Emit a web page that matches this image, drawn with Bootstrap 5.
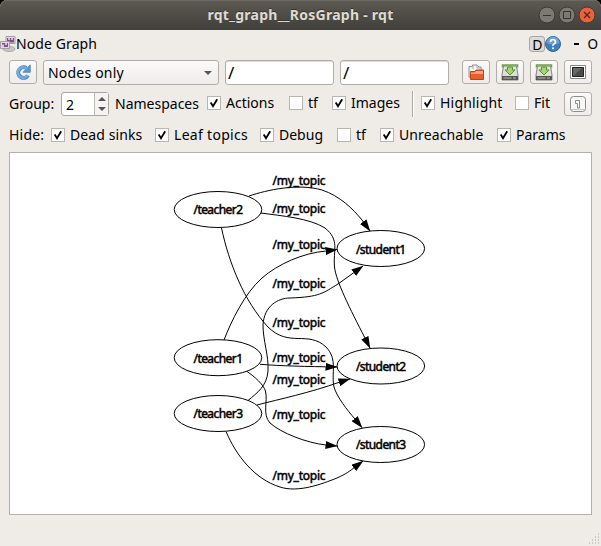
<!DOCTYPE html>
<html lang="en">
<head>
<meta charset="utf-8">
<meta name="viewport" content="width=device-width, initial-scale=1">
<title>rqt_graph__RosGraph - rqt</title>
<link href="https://cdn.jsdelivr.net/npm/bootstrap@5.3.0/dist/css/bootstrap.min.css" rel="stylesheet">
<style>
html{background:#000}
body{background:#000;width:601px;height:546px;overflow:hidden;font:14px/20px "Noto Sans","Open Sans",sans-serif;color:#000}
.win{height:546px;background:#efebe7;border-radius:7px 7px 0 0;overflow:hidden}
.titlebar{height:30px;background:linear-gradient(#5c5a52,#403f3a);color:#dfdbd2;font-weight:700;font-size:14px;box-shadow:inset 0 1px #6b6962}
.titlebar .caption{letter-spacing:.27px;text-shadow:0 -1px #35342f}
.winbtns{right:5px;top:6px;gap:2px}
.dockbar{height:28px;padding:0 3px 0 0}
.dock-title{letter-spacing:.1px}
.dockd{width:16px;height:16px;border:1px solid #aaa6a2;border-radius:3px;background:#dedad7;line-height:15px;font-size:14px}
.dock-min{margin-left:13px;width:5px;height:2px;background:#000}
.dock-max{margin-left:8px;font-size:13.500px}
.tool-row{height:32px;padding:0 9px}
.row2{padding-top:2px}
.row3{height:28px}
.row4{height:28px;margin-top:3px}
.row3>*,.row4>*{flex:none}
.row3 .ns{padding-left:6px;width:98px}
.btn-set{gap:6px}
.ubtn{width:28px;height:24px;padding:0;border:1px solid #b1aeaa;border-radius:3px;background:linear-gradient(#fbfafa,#efecea);line-height:0}
.ubtn svg{display:block}
.uinput{width:109px;height:25px;border:1px solid #b1aeaa;border-radius:3px;background:#fff;padding:0 2px;font-size:17px;line-height:23px;color:#000;box-shadow:inset 0 1px #ddd}
.uinput+.uinput{margin-left:6px}
.combo{width:176px;height:25px;margin:0 6px;border:1px solid #b1aeaa;border-radius:3px;background:linear-gradient(#fbfafa,#efecea);padding:0 6px 0 4px;letter-spacing:.2px}
.tri{width:0;height:0;border:4px solid transparent}
.tri-down{border-top-color:#555;border-bottom:0}
.tri-up{border-bottom-color:#555;border-top:0}
.spin{width:48px;height:24px;border:1px solid #aaa7a3;border-radius:3px;background:#fff}
.spin-value{line-height:23px}
.spin-arrows{width:14px;border-left:1px solid #c0bdb9;background:#f5f3f1;gap:6px}
.chk{height:20px;white-space:nowrap}
.chk .form-check-input{width:14px;height:14px;margin:0 5px 0 0;border:1px solid #b9b6b2;border-radius:0;background-color:#fff;flex:none;box-shadow:none}
.chk .form-check-input:checked{background-image:url("data:image/svg+xml,%3Csvg xmlns='http://www.w3.org/2000/svg' viewBox='0 0 12 12'%3E%3Cpath d='M2.7 5.6L5 9.3 9.2 2.2' fill='none' stroke='%23000' stroke-width='1.8'/%3E%3C/svg%3E");background-size:12px 12px}
.row3 .chk{transform:translateY(-1px)}
.w-group{width:52px}.w-hide{width:42px;letter-spacing:.2px}
.w-act{width:82px}.w-tf{width:43px}.w-img{width:80px}.w-hl{width:94px}.w-fit{width:49px}
.w-hl{letter-spacing:.2px}
.w-dead{width:104px;letter-spacing:.1px}.w-leaf{width:105px;letter-spacing:.3px}.w-debug{width:77px}.w-unr{width:117px;letter-spacing:.1px}.w-par{width:75px}
.vsep{width:2px;height:26px;background:#aaa7a3;border-right:1px solid #fff;margin-right:7px}
.canvas{margin:3px 9px 0;width:583px;height:363px;background:#fff;border:1px solid #b4b1ad}
.canvas text{font:12px "Noto Sans","Open Sans",sans-serif;stroke:#000;stroke-width:.5px}
.grip{right:1px;bottom:1px}
</style>
</head>
<body>
<div class="win position-relative">
  <header class="titlebar d-flex align-items-center justify-content-center position-relative">
    <span class="caption">rqt_graph__RosGraph - rqt</span>
    <div class="winbtns position-absolute d-flex">
      <svg width="18" height="18"><circle cx="9" cy="9" r="8" fill="#7b7972" stroke="#3a3935"/><path d="M5 9.5h8" stroke="#34332f"/></svg>
      <svg width="18" height="18"><circle cx="9" cy="9" r="8" fill="#7b7972" stroke="#3a3935"/><path d="M5.500 5.500h7v7h-7z" fill="none" stroke="#34332f"/></svg>
      <svg width="18" height="18"><circle cx="9" cy="9" r="8" fill="#ee6038" stroke="#3f3b35"/><path d="M6 6l6 6M12 6l-6 6" stroke="#4a2a1c" stroke-width="1.300"/></svg>
    </div>
  </header>

  <div class="dockbar d-flex align-items-center">
    <svg width="16" height="16" viewBox="0 0 16 16"><ellipse cx="9" cy="13" rx="6" ry="2.500" fill="#c9c7c5" stroke="#aaa"/><path d="M6 .5h9v7H6z" fill="#ddd" stroke="#a49fa4"/><path d="M7 2h7v4.500H7z" fill="#8b4a91"/><path d="M8 2h2v2H8zM11 2h2v2h-2z" fill="#d9b5dc"/><path d="M.5 5.500h9v7h-9z" fill="#ddd" stroke="#a49fa4"/><path d="M2 7h6v4H2z" fill="#8b4a91"/><path d="M2 8.500h2V11H2zM5 7h2v2H5z" fill="#e0bde2"/></svg>
    <span class="dock-title">Node Graph</span>
    <span class="dockd ms-auto text-center">D</span>
    <svg width="16" height="16" viewBox="0 0 16 16"><circle cx="8" cy="8" r="7.500" fill="#3f7fbb" stroke="#2a659f"/><path d="M1.500 7a6.500 6.500 0 0 1 13 0q-6 3-13 0z" fill="#6ba0d0"/><path d="M5.500 6q0-2.500 2.500-2.500T10.500 6Q10.500 7.200 9 8T8 10" fill="none" stroke="#fff" stroke-width="1.700"/><circle cx="8" cy="12.200" r="1" fill="#fff"/></svg>
    <span class="dock-min"></span><span class="dock-max">O</span>
  </div>

  <div class="tool-row row2 d-flex align-items-start">
    <button class="btn ubtn d-flex align-items-center justify-content-center flex-shrink-0" aria-label="Refresh"><svg width="16" height="16" viewBox="0 0 16 16"><path d="M13 11.500A5.300 5.300 0 1 1 11.300 4" fill="none" stroke="#4a86c0" stroke-width="4"/><path d="M15.300.8v7.500H8z" fill="#5c97cf" stroke="#4a86c0" stroke-width=".8"/><path d="M12.700 11.200A5.300 5.300 0 1 1 11.800 4.600" fill="none" stroke="#78abdc" stroke-width="2.500"/></svg></button>
    <div class="combo d-flex align-items-center justify-content-between flex-shrink-0"><span>Nodes only</span><span class="tri tri-down"></span></div>
    <div class="uinput flex-shrink-0">/</div>
    <div class="uinput flex-shrink-0">/</div>
    <div class="btn-set d-flex ms-auto">
      <button class="btn ubtn d-flex align-items-center justify-content-center" aria-label="Open"><svg width="17" height="17" viewBox="0 0 17 17"><path d="M1 13V2.500h3.500V1H9l2 2h2v10z" fill="#f4f4f3" stroke="#8d8b88"/><path d="M5 1.500V5M9 1v3h3" fill="none" stroke="#aaa"/><path d="M2.500 15.500V7.500H7l1-1.500h7.500v9.500z" fill="#e65f2c" stroke="#b8441b"/><path d="M3 10h12V7H8L7 8.500H3z" fill="#f7a283"/></svg></button>
      <button class="btn ubtn d-flex align-items-center justify-content-center" aria-label="Save DOT"><svg width="18" height="17" viewBox="0 0 18 17"><path d="M2.500 2h13l1.500 9v5H1v-5z" fill="#dededb" stroke="#858582"/><path d="M1 12h16v4H1z" fill="#555652"/><path d="M2.500 14h8M12 14h3" stroke="#bbb"/><path d="M1.500 3.500V1h15v2.500" fill="none" stroke="#69a43c" stroke-width="1.500"/><path d="M6.500 3h5v3H14l-5 5-5-5h2.500z" fill="#a4d36f" stroke="#5a952e"/></svg></button>
      <button class="btn ubtn d-flex align-items-center justify-content-center" aria-label="Save SVG"><svg width="18" height="17" viewBox="0 0 18 17"><path d="M2.500 2h13l1.500 9v5H1v-5z" fill="#dededb" stroke="#858582"/><path d="M1 12h16v4H1z" fill="#555652"/><path d="M2.500 14h8M12 14h3" stroke="#bbb"/><path d="M1.500 3.500V1h15v2.500" fill="none" stroke="#69a43c" stroke-width="1.500"/><path d="M6.500 3h5v3H14l-5 5-5-5h2.500z" fill="#a4d36f" stroke="#5a952e"/></svg></button>
      <button class="btn ubtn d-flex align-items-center justify-content-center" aria-label="Save image"><svg width="16" height="14" viewBox="0 0 16 14"><path d="M.5.5h15v13H.5z" fill="#fff" stroke="#888"/><path d="M2.500 2.500h11v9h-11z" fill="#4b4c49" stroke="#222"/><path d="M3 3h9L3 11z" fill="#6a6b67"/></svg></button>
    </div>
  </div>

  <div class="tool-row row3 d-flex align-items-center">
    <span class="w-group">Group:</span>
    <div class="spin d-flex"><span class="spin-value flex-grow-1 ps-1">2</span><span class="spin-arrows d-flex flex-column align-items-center justify-content-center"><i class="tri tri-up"></i><i class="tri tri-down"></i></span></div>
    <span class="ns">Namespaces</span>
    <label class="chk w-act d-flex align-items-center"><input class="form-check-input" type="checkbox" checked>Actions</label>
    <label class="chk w-tf d-flex align-items-center"><input class="form-check-input" type="checkbox">tf</label>
    <label class="chk w-img d-flex align-items-center"><input class="form-check-input" type="checkbox" checked>Images</label>
    <span class="vsep"></span>
    <label class="chk w-hl d-flex align-items-center"><input class="form-check-input" type="checkbox" checked>Highlight</label>
    <label class="chk w-fit d-flex align-items-center"><input class="form-check-input" type="checkbox">Fit</label>
    <button class="btn ubtn d-flex align-items-center justify-content-center" aria-label="Fit in view"><svg width="16" height="16" viewBox="0 0 16 16"><rect x=".5" y=".5" width="15" height="15" rx="3" fill="#f7f7f6" stroke="#8c8b88"/><path d="M1.500 13.500h13" stroke="#c9c8c6"/><path d="M5.500 4.500h4v7.500h-2V7.500h-2z" fill="#fff" stroke="#888"/></svg></button>
  </div>

  <div class="tool-row row4 d-flex align-items-center">
    <span class="w-hide">Hide:</span>
    <label class="chk w-dead d-flex align-items-center"><input class="form-check-input" type="checkbox" checked>Dead sinks</label>
    <label class="chk w-leaf d-flex align-items-center"><input class="form-check-input" type="checkbox" checked>Leaf topics</label>
    <label class="chk w-debug d-flex align-items-center"><input class="form-check-input" type="checkbox" checked>Debug</label>
    <label class="chk w-tf d-flex align-items-center"><input class="form-check-input" type="checkbox">tf</label>
    <label class="chk w-unr d-flex align-items-center"><input class="form-check-input" type="checkbox" checked>Unreachable</label>
    <label class="chk w-par d-flex align-items-center"><input class="form-check-input" type="checkbox" checked>Params</label>
  </div>

  <main class="canvas">
    <svg class="d-block" width="581" height="361" viewBox="10 153 581 361">
      <defs><marker id="arrow" markerUnits="userSpaceOnUse" markerWidth="12" markerHeight="8" refX="11.500" refY="4" orient="auto"><path d="M0 0L12 4 0 8z"/></marker></defs>
      <g fill="none" stroke="#000">
        <ellipse cx="218" cy="209.500" rx="43.800" ry="18"/><ellipse cx="218" cy="357.700" rx="43.800" ry="18"/><ellipse cx="218" cy="413.500" rx="43.800" ry="18"/>
        <ellipse cx="380.800" cy="248.500" rx="43.800" ry="18"/><ellipse cx="380.800" cy="366" rx="43.800" ry="18"/><ellipse cx="380.800" cy="444.500" rx="43.800" ry="18"/>
        <g marker-end="url(#arrow)">
          <path d="M249 196C267 190 298 183 322 190C340 196 353 209 362 220L370 231"/>
          <path d="M261 213C282 216 309 218 325 228C340 240 333 250 334.500 267C336 281 350 309 365 338L370 348"/>
          <path d="M221.500 228C229 263 244 301 268 327C289 348 308 330 326 347C338 359 331 374 334 387C337 397 347 410 355 419L362 427.500"/>
          <path d="M224 340C231 322 244 294 262 278C278 264 303 253 326 251L337 249.500"/>
          <path d="M260 364.300C282 366 305 366.500 337 367"/>
          <path d="M247 371.500C255 377 263 384 265.500 391C268 402 262 414 270 423C281 433 307 443 326 445L337 446"/>
          <path d="M248 400.500C257 393 267 386 268 371C269 356 263 341 263 325C264 306 278 298 290 298C320 297 323 293 338 284L363 266"/>
          <path d="M257 405C280 399 309 393 340 382L350 379"/>
          <path d="M226 431.500C236 455 254 479 280 487C298 493 322 484 337 478C346 474 350 471 355 467L363 461"/>
        </g>
      </g>
      <g>
        <text x="272.500" y="185" textLength="53">/my_topic</text><text x="272.500" y="213" textLength="53">/my_topic</text><text x="272.500" y="249" textLength="53">/my_topic</text><text x="272.500" y="288" textLength="53">/my_topic</text><text x="272.500" y="327" textLength="53">/my_topic</text><text x="272.500" y="362" textLength="53">/my_topic</text><text x="272.500" y="384" textLength="53">/my_topic</text><text x="272.500" y="419" textLength="53">/my_topic</text><text x="272.500" y="480" textLength="53">/my_topic</text>
        <text x="193.500" y="214" textLength="49.500">/teacher2</text><text x="193.500" y="363" textLength="49.500">/teacher1</text><text x="193.500" y="418" textLength="49.500">/teacher3</text>
        <text x="356" y="253.500" textLength="50">/student1</text><text x="356" y="371" textLength="50">/student2</text><text x="356" y="449" textLength="50">/student3</text>
      </g>
    </svg>
  </main>
  <svg class="grip position-absolute" width="12" height="12"><path d="M10 1h1M7 4h1M10 4h1M4 7h1M7 7h1M10 7h1M1 10h1M4 10h1M7 10h1M10 10h1" stroke="#a9a5a1"/></svg>
</div>
<script src="https://cdn.jsdelivr.net/npm/bootstrap@5.3.0/dist/js/bootstrap.bundle.min.js"></script>
</body>
</html>
